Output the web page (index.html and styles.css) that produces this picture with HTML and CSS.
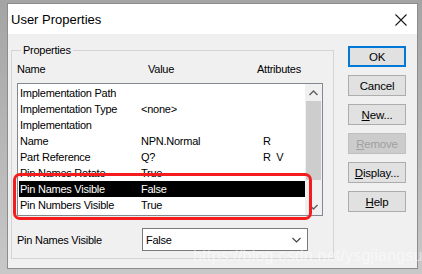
FILE: index.html
```html
<!DOCTYPE html>
<html lang="en">
<head>
    <meta charset="UTF-8">
    <title>User Properties</title>
    <link rel="stylesheet" href="styles.css">
</head>
<body>
    <div class="dialog">
        <div class="titlebar">
            <span class="title">User Properties</span>
            <svg class="close" width="12" height="12" viewBox="0 0 12 12">
                <path d="M0.5 0.5 L11.5 11.5 M11.5 0.5 L0.5 11.5" stroke="#1a1a1a" stroke-width="1.1" fill="none"/>
            </svg>
        </div>

        <div class="content">
            <fieldset class="group">
                <legend>Properties</legend>
                <div class="headers">
                    <span class="col-name">Name</span>
                    <span class="col-value">Value</span>
                    <span class="col-attr">Attributes</span>
                </div>

                <div class="listbox">
                    <div class="rows">
                        <div class="row"><span class="c-name">Implementation Path</span><span class="c-value"></span><span class="c-attr"></span></div>
                        <div class="row"><span class="c-name">Implementation Type</span><span class="c-value">&lt;none&gt;</span><span class="c-attr"></span></div>
                        <div class="row"><span class="c-name">Implementation</span><span class="c-value"></span><span class="c-attr"></span></div>
                        <div class="row"><span class="c-name">Name</span><span class="c-value">NPN.Normal</span><span class="c-attr">R</span></div>
                        <div class="row"><span class="c-name">Part Reference</span><span class="c-value">Q?</span><span class="c-attr">R&nbsp;&nbsp;V</span></div>
                        <div class="row"><span class="c-name">Pin Names Rotate</span><span class="c-value">True</span><span class="c-attr"></span></div>
                        <div class="row selected"><span class="c-name">Pin Names Visible</span><span class="c-value">False</span><span class="c-attr"></span></div>
                        <div class="row"><span class="c-name">Pin Numbers Visible</span><span class="c-value">True</span><span class="c-attr"></span></div>
                    </div>
                    <div class="scrollbar">
                        <div class="sb-btn">
                            <svg width="9" height="6" viewBox="0 0 9 6"><path d="M0.5 5 L4.5 1 L8.5 5" stroke="#606060" stroke-width="1.4" fill="none"/></svg>
                        </div>
                        <div class="sb-thumb"></div>
                        <div class="sb-track"></div>
                        <div class="sb-btn">
                            <svg width="9" height="6" viewBox="0 0 9 6"><path d="M0.5 1 L4.5 5 L8.5 1" stroke="#606060" stroke-width="1.4" fill="none"/></svg>
                        </div>
                    </div>
                    <div class="highlight"></div>
                </div>

                <div class="combo-row">
                    <span class="combo-label">Pin Names Visible</span>
                    <div class="combo">
                        <span>False</span>
                        <svg width="9" height="6" viewBox="0 0 9 6"><path d="M0.5 1 L4.5 5 L8.5 1" stroke="#404040" stroke-width="1.1" fill="none"/></svg>
                    </div>
                </div>
            </fieldset>

            <div class="buttons">
                <button class="btn default">OK</button>
                <button class="btn">Cancel</button>
                <button class="btn"><u>N</u>ew...</button>
                <button class="btn" disabled><u>R</u>emove</button>
                <button class="btn"><u>D</u>isplay...</button>
                <button class="btn"><u>H</u>elp</button>
            </div>
        </div>

        <div class="watermark">https://blog.csdn.net/ysgjiangsu</div>
    </div>
</body>
</html>
```

FILE: styles.css
```css
body {
    margin: 0;
    width: 422px;
    height: 274px;
    overflow: hidden;
    background: linear-gradient(#a4a4a4, #c8c8c8);
    padding: 3px 0 0 7px;
    box-sizing: border-box;
    font-family: "Liberation Sans", Arial, sans-serif;
}
.dialog {
    position: relative;
    width: 411px;
    height: 266px;
    border: 1px solid #8c8c8c;
    box-sizing: border-box;
    background: #f0f0f0;
    display: flex;
    flex-direction: column;
}
.titlebar {
    height: 30px;
    background: #fff;
    display: flex;
    align-items: center;
    justify-content: space-between;
    padding: 0 10px 0 3px;
}
.title {
    font-size: 13px;
    color: #000;
    margin-top: 1px;
}
.close {
    margin-top: 1px;
}
.content {
    flex: 1;
    display: flex;
    padding: 10px 0 0 3px;
    font-size: 11px;
    letter-spacing: -0.25px;
    color: #000;
}
.group {
    margin: 0;
    width: 323px;
    height: 215px;
    box-sizing: border-box;
    border: 1px solid #d4d4d4;
    padding: 0 10px 0 5px;
    display: flex;
    flex-direction: column;
}
.group legend {
    padding: 0 2px;
    margin-left: 4px;
}
.headers {
    display: flex;
    height: 13px;
    line-height: 13px;
    margin-top: 7px;
}
.col-name { width: 131px; }
.col-value { width: 109px; }
.listbox {
    position: relative;
    margin-top: 7px;
    height: 133px;
    border: 1px solid #828790;
    background: #fff;
    display: flex;
    padding: 1px;
    box-sizing: border-box;
}
.rows {
    flex: 1;
}
.row {
    display: flex;
    height: 16px;
    line-height: 16px;
    padding-left: 1px;
}
.row.selected {
    background: #000;
    color: #fff;
}
.c-name { width: 121px; }
.c-value { width: 122px; }
.scrollbar {
    width: 17px;
    display: flex;
    flex-direction: column;
    background: #f0f0f0;
    margin: -1px -1px -1px 0;
}
.sb-btn {
    height: 17px;
    display: flex;
    align-items: center;
    justify-content: center;
}
.sb-thumb {
    height: 79px;
    background: #cdcdcd;
    margin: 0 1px;
}
.sb-track {
    flex: 1;
}
.highlight {
    position: absolute;
    left: -5px;
    top: 89px;
    width: 299px;
    height: 47px;
    border: 3px solid #f41c1c;
    border-radius: 7px;
    box-sizing: border-box;
}
.combo-row {
    display: flex;
    align-items: center;
    margin-top: 12px;
}
.combo-label {
    width: 125px;
}
.combo {
    width: 166px;
    height: 23px;
    box-sizing: border-box;
    border: 1px solid #7a7a7a;
    background: #fff;
    display: flex;
    align-items: center;
    justify-content: space-between;
    padding: 0 6px 0 3px;
}
.buttons {
    display: flex;
    flex-direction: column;
    gap: 8px;
    margin-left: 14px;
    padding-top: 2px;
}
.btn {
    width: 58px;
    height: 21px;
    padding: 0;
    border: 1px solid #adadad;
    background: #e1e1e1;
    font-family: "Liberation Sans", Arial, sans-serif;
    font-size: 11.5px;
    letter-spacing: -0.2px;
    color: #000;
}
.btn.default {
    border: 2px solid #0078d7;
}
.btn:disabled {
    border-color: #bfbfbf;
    background: #cccccc;
    color: #a0a0a0;
}
.watermark {
    position: absolute;
    left: 185px;
    top: 243px;
    font-family: "Liberation Sans", Arial, sans-serif;
    font-size: 16px;
    color: rgba(255, 255, 255, 0.5);
    letter-spacing: 0.2px;
}
```
